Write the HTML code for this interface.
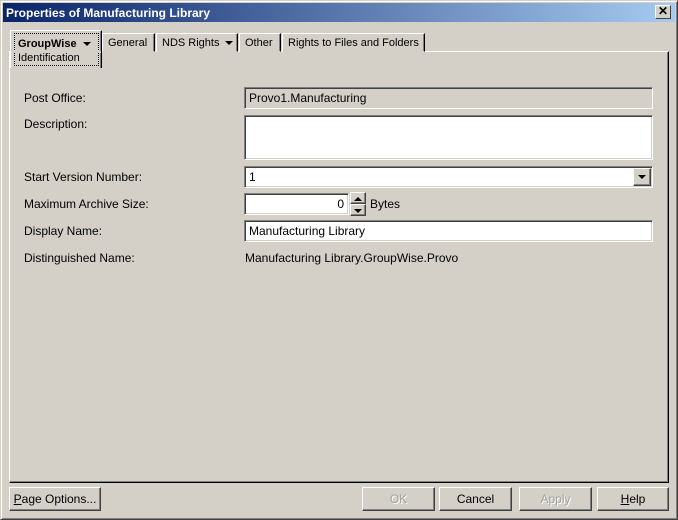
<!DOCTYPE html>
<html><head><style>
*{box-sizing:border-box;margin:0;padding:0}
body{width:678px;height:520px;background:#d4d0c8;font-family:"Liberation Sans",Arial,sans-serif;font-size:12px;color:#000;position:relative;overflow:hidden;line-height:14px}
.a{position:absolute;white-space:nowrap}
.win{left:0;top:0;width:678px;height:520px;border:1px solid;border-color:#d4d0c8 #404040 #404040 #d4d0c8;box-shadow:inset 1px 1px #fff,inset -1px -1px #808080}
.title{left:3px;top:3px;width:672px;height:19px;background:linear-gradient(90deg,#0a246a,#a6caf0);color:#fff;font-weight:bold;font-size:12px;padding:3px 3px}
.x{left:655px;top:5px;width:16px;height:14px;background:#d4d0c8;border:1px solid;border-color:#fff #404040 #404040 #fff;font-size:12px;font-weight:bold;text-align:center;line-height:11px;color:#000}
.panel{left:9px;top:51px;width:660px;height:432px;border:1px solid;border-color:#fff #000 #000 #fff;box-shadow:inset -1px -1px #808080}
.tab{top:33px;height:19px;border:1px solid;border-color:#fff #000 transparent #fff;box-shadow:inset -1px 0 #808080;padding:3px 4px 0 5px;font-size:11px;background:#d4d0c8;line-height:13px}
.sunk{border:1px solid;border-color:#808080 #fff #fff #808080;box-shadow:inset 1px 1px #404040,inset -1px -1px #d4d0c8;background:#fff;padding:3px 4px;font-size:12px}
.lbl{left:24px;font-size:12px}
.btn{top:487px;height:24px;border:1px solid;border-color:#fff #404040 #404040 #fff;box-shadow:inset -1px -1px #808080;text-align:center;line-height:23px;font-size:12px}
.dis{color:#a0a0a0;text-shadow:1px 1px #fff}
.arrow{display:inline-block;width:0;height:0;border-left:4px solid transparent;border-right:4px solid transparent;border-top:4px solid #000;vertical-align:middle;margin-left:6px}
.sb{border:1px solid;border-color:#fff #404040 #404040 #fff;box-shadow:inset -1px -1px #808080;background:#d4d0c8}
</style></head><body>
<div class="a win"></div>
<div class="a title">Properties of Manufacturing Library</div>
<div class="a x">✕</div>
<div class="a panel"></div>
<div class="a tab" style="left:10px;top:30px;height:38px;width:92px;border-bottom:none;z-index:2;padding:2px 2px 0 3px">
 <div style="border:1px dotted #000;height:33px;padding:3px 3px;font-size:11px;line-height:14px"><b>GroupWise</b><span class="arrow"></span><br>Identification</div>
</div>
<div class="a" style="left:11px;top:51px;width:90px;height:2px;background:#d4d0c8;z-index:3"></div>
<div class="a tab" style="left:102px;width:53px">General</div>
<div class="a tab" style="left:156px;width:82px">NDS Rights<span class="arrow"></span></div>
<div class="a tab" style="left:239px;width:42px">Other</div>
<div class="a tab" style="left:282px;width:143px">Rights to Files and Folders</div>

<div class="a lbl" style="top:91px">Post Office:</div>
<div class="a sunk" style="left:244px;top:87px;width:409px;height:22px;background:#d4d0c8">Provo1.Manufacturing</div>
<div class="a lbl" style="top:117px">Description:</div>
<div class="a sunk" style="left:244px;top:115px;width:409px;height:45px"></div>
<div class="a lbl" style="top:170px">Start Version Number:</div>
<div class="a sunk" style="left:244px;top:166px;width:409px;height:22px">1</div>
<div class="a sb" style="left:633px;top:168px;width:18px;height:18px;text-align:center;line-height:14px"><span class="arrow" style="margin:0"></span></div>
<div class="a lbl" style="top:197px">Maximum Archive Size:</div>
<div class="a sunk" style="left:244px;top:193px;width:105px;height:22px;text-align:right">0</div>
<div class="a sb" style="left:350px;top:192px;width:16px;height:12px;text-align:center;line-height:8px"><span style="display:inline-block;border-left:4px solid transparent;border-right:4px solid transparent;border-bottom:4px solid #000"></span></div>
<div class="a sb" style="left:350px;top:204px;width:16px;height:12px;text-align:center;line-height:8px"><span style="display:inline-block;border-left:4px solid transparent;border-right:4px solid transparent;border-top:4px solid #000"></span></div>
<div class="a" style="left:370px;top:197px">Bytes</div>
<div class="a lbl" style="top:224px">Display Name:</div>
<div class="a sunk" style="left:244px;top:220px;width:409px;height:22px">Manufacturing Library</div>
<div class="a lbl" style="top:251px">Distinguished Name:</div>
<div class="a" style="left:245px;top:251px">Manufacturing Library.GroupWise.Provo</div>

<div class="a btn" style="left:9px;width:92px"><u>P</u>age Options...</div>
<div class="a btn dis" style="left:362px;width:73px">OK</div>
<div class="a btn" style="left:439px;width:73px">Cancel</div>
<div class="a btn dis" style="left:519px;width:73px">Apply</div>
<div class="a btn" style="left:597px;width:72px"><u>H</u>elp</div>
</body></html>
